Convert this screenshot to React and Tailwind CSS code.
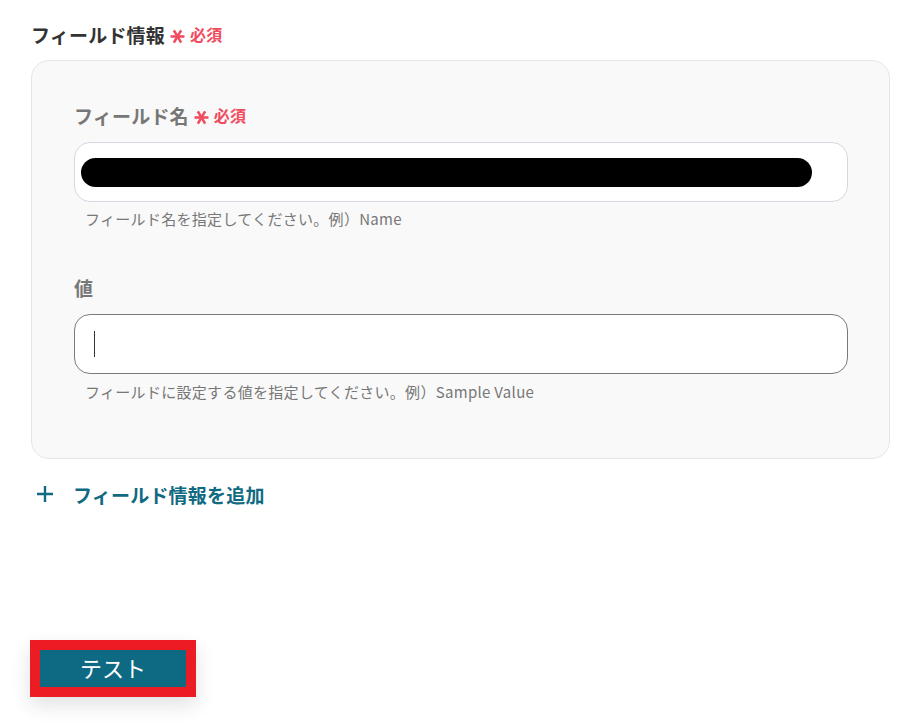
import React from "react";

const font = { fontFamily: '"Noto Sans CJK JP", "Noto Sans", sans-serif' };

function Asterisk() {
  return (
    <svg width="15" height="15" viewBox="0 0 14 14" className="relative top-[2px]">
      <g stroke="#f04b5e" strokeWidth="2.4" strokeLinecap="butt">
        <path d="M0.5 7h13" />
        <path d="M3.6 1.2L10.4 12.8" />
        <path d="M10.4 1.2L3.6 12.8" />
      </g>
    </svg>
  );
}

function Required() {
  return (
    <span className="ml-[5px] inline-flex items-center text-[#f04b5e] font-bold">
      <Asterisk />
      <span className="ml-[5px] text-[16px]">必須</span>
    </span>
  );
}

export default function App() {
  return (
    <div className="w-[907px] h-[725px] bg-white relative" style={font}>
      <div className="pl-[31px] pr-[17px] pt-[21px]">
        <div className="flex items-center h-[26px] text-[19px] font-bold text-[#333333] leading-none tracking-[0.2px]">
          フィールド情報
          <Required />
        </div>
        <div className="mt-[13px] h-[399px] rounded-[18px] border border-[#e6e6e6] bg-[#f9f9f9] pl-[42px] pr-[41px] pt-[40px]">
          <div className="flex items-center h-[28px] text-[19px] font-bold text-[#777777] leading-none tracking-[0.2px]">
            フィールド名
            <Required />
          </div>
          <div className="mt-[13px] h-[60px] rounded-[16px] border border-[#d3d8e0] bg-white flex items-center pl-[6px]">
            <div className="h-[29px] w-[731px] rounded-full bg-black" />
          </div>
          <div className="mt-[7px] pl-[11px] text-[15px] text-[#777777] leading-[20px] tracking-[0.3px]">
            フィールド名を指定してください。例）Name
          </div>
          <div className="mt-[44px] flex items-center h-[28px] text-[19px] font-bold text-[#777777] leading-none">
            値
          </div>
          <div className="mt-[13px] h-[60px] rounded-[16px] border border-[#7a7a7a] bg-white flex items-center pl-[19px]">
            <div className="w-[1px] h-[26px] bg-[#333]" />
          </div>
          <div className="mt-[8px] pl-[11px] text-[15px] text-[#777777] leading-[20px] tracking-[0.3px]">
            フィールドに設定する値を指定してください。例）Sample Value
          </div>
        </div>
        <div className="mt-[22px] flex items-center h-[26px] text-[19px] font-bold text-[#0f6a82] leading-none tracking-[0.2px]">
          <svg width="18" height="18" viewBox="0 0 18 18" className="ml-[5px] mr-[19px]">
            <path d="M9 1v16M1 9h16" stroke="#0f6a82" strokeWidth="2.4" />
          </svg>
          フィールド情報を追加
        </div>
      </div>
      <div className="absolute left-[30px] top-[640px] w-[166px] h-[57px] bg-[#ec1c24] p-[10px] shadow-[0_8px_20px_rgba(0,0,0,0.12)]">
        <div className="w-full h-full bg-[#0e6a82] flex items-center justify-center text-white text-[22px] leading-none">
          <span className="relative -top-[2px]">テスト</span>
        </div>
      </div>
    </div>
  );
}
